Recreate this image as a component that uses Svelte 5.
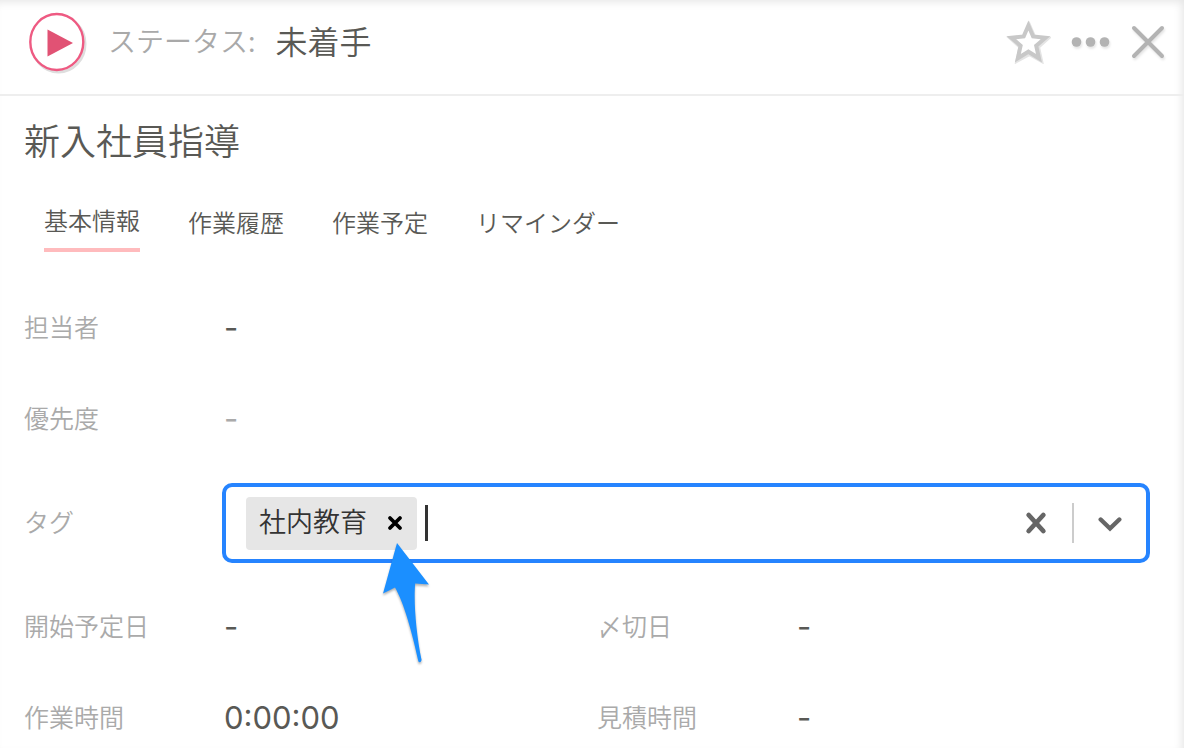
<script>
	let status = "未着手";
	let title = "新入社員指導";
	let activeTab = 0;
	let starred = false;
	let tags = ["社内教育"];
	let tagText = "";

	const tabs = ["基本情報", "作業履歴", "作業予定", "リマインダー"];

	function removeTag(i) {
		tags = tags.filter((t, n) => n !== i);
	}

	function clearTags() {
		tags = [];
		tagText = "";
	}
</script>

<div class="panel">
	<header>
		<button class="play" aria-label="開始">
			<svg width="60" height="62" viewBox="0 0 60 62">
				<ellipse cx="30.5" cy="32" rx="26.5" ry="28" fill="none" stroke="#dedede" stroke-width="3" />
				<ellipse cx="28.8" cy="30" rx="26.5" ry="28" fill="#fff" stroke="#ee5a82" stroke-width="2.4" />
				<path d="M19.5 17.5L45 31L19.5 44.5Z" fill="#e15274" />
			</svg>
		</button>
		<span class="statusLabel">ステータス:</span>
		<span class="status">{status}</span>

		<div class="actions">
			<button aria-label="お気に入り" aria-pressed={starred} on:click={() => (starred = !starred)}>
				<svg width="45" height="44" viewBox="0 0 45 44">
					<path d="M23.5 6L28.5 17.5L41.5 18.5L32 27L35 40.5L23.5 34L11.5 40.5L14.5 27L5 18.5L18.5 17.5Z" fill="none" stroke="#e4e4e4" stroke-width="4" />
					<path
						d="M22.4 5.5L27.1 16.4L39.5 17.7L30.2 25.7L33 38.2L22.4 31.7L11.8 38.2L14.6 25.7L5.3 17.7L17.7 16.4Z"
						fill={starred ? "#c8c8c8" : "#fff"}
						stroke="#c8c8c8"
						stroke-width="4"
					/>
				</svg>
			</button>
			<button aria-label="メニュー">
				<svg class="shadow" width="40" height="12" viewBox="0 0 40 12">
					<circle cx="5.5" cy="6" r="4.8" fill="#b3b3b3" />
					<circle cx="19.5" cy="6" r="4.8" fill="#b3b3b3" />
					<circle cx="33.5" cy="6" r="4.8" fill="#b3b3b3" />
				</svg>
			</button>
			<button aria-label="閉じる">
				<svg class="shadow" width="34" height="34" viewBox="0 0 34 34">
					<path d="M3 3L31 31M31 3L3 31" stroke="#b3b3b3" stroke-width="4" stroke-linecap="round" />
				</svg>
			</button>
		</div>
	</header>

	<h1>{title}</h1>

	<nav>
		{#each tabs as tab, i}
			<button class:active={activeTab === i} on:click={() => (activeTab = i)}>{tab}</button>
		{/each}
	</nav>

	<div class="fields">
		<div class="field wide">
			<span class="label">担当者</span>
			<span class="value">-</span>
		</div>
		<div class="field wide">
			<span class="label">優先度</span>
			<span class="value empty">-</span>
		</div>

		<div class="field wide">
			<label class="label" for="tags">タグ</label>
			<div class="select">
				{#each tags as tag, i}
					<div class="tag">
						<span>{tag}</span>
						<button aria-label="削除" on:click={() => removeTag(i)}>
							<svg width="16" height="16" viewBox="0 0 16 16">
								<path d="M3 3L13 13M13 3L3 13" stroke="#000" stroke-width="3.8" stroke-linecap="round" />
							</svg>
						</button>
						<svg class="arrow" width="54" height="126" viewBox="0 0 54 126">
							<path
								d="M17 2L49 43.5L35.2 42.5C33.5 60 36 92 41.6 119Q40.5 122.5 38.4 120.5C32 91 24 62 15 46.5L3 52.5Z"
								fill="#1b8fff"
							/>
						</svg>
					</div>
				{/each}
				<span class="caret"></span>
				<input id="tags" type="text" autocomplete="off" bind:value={tagText} />
				<button aria-label="クリア" on:click={clearTags}>
					<svg width="24" height="24" viewBox="0 0 24 24">
						<path d="M4.7 4L19.3 20M19.3 4L4.7 20" stroke="#666" stroke-width="4.8" stroke-linecap="round" />
					</svg>
				</button>
				<span class="separator"></span>
				<button aria-label="開く">
					<svg width="24" height="24" viewBox="0 0 24 24">
						<path d="M2.7 8.5L12 17.5L21.3 8.5" fill="none" stroke="#666" stroke-width="4.4" stroke-linecap="round" />
					</svg>
				</button>
			</div>
		</div>

		<div class="field">
			<span class="label">開始予定日</span>
			<span class="value">-</span>
		</div>
		<div class="field">
			<span class="label">〆切日</span>
			<span class="value">-</span>
		</div>
		<div class="field">
			<span class="label">作業時間</span>
			<span class="value">0:00:00</span>
		</div>
		<div class="field">
			<span class="label">見積時間</span>
			<span class="value">-</span>
		</div>
	</div>
</div>

<style>
	:global(body) {
		margin: 0;
		background: #fff;
	}

	.panel {
		min-height: 100vh;
		box-sizing: border-box;
		color: #595955;
		font-family: "Noto Sans CJK JP", sans-serif;
		font-weight: 350;
		box-shadow: inset -4px 4px 8px -2px #e6e6e6;
	}

	button {
		display: flex;
		padding: 0;
		border: 0;
		background: none;
		color: inherit;
		font: inherit;
		cursor: pointer;
	}

	svg {
		display: block;
	}

	header {
		display: flex;
		align-items: center;
		padding: 12px 19px 20px 28px;
		border-bottom: 2px solid #eee;
	}

	.statusLabel {
		margin-left: 20px;
		padding-bottom: 6px;
		color: #a9a9a9;
		font-size: 28px;
		line-height: 40px;
	}

	.status {
		margin-left: 20px;
		padding-bottom: 6px;
		font-size: 32px;
		line-height: 40px;
	}

	.actions {
		display: flex;
		align-items: center;
		gap: 20px;
		margin-left: auto;
		padding-bottom: 2px;
	}

	.shadow {
		filter: drop-shadow(1px 2px 1px #e4e4e4);
	}

	h1 {
		margin: 17px 24px 0;
		font-size: 36px;
		font-weight: 350;
		line-height: 52px;
	}

	nav {
		display: flex;
		align-items: flex-start;
		gap: 48px;
		margin: 37px 44px 0;
	}

	nav button {
		padding: 2px 0 8px;
		font-size: 24px;
		line-height: 36px;
	}

	nav .active {
		padding: 0 0 10px;
		border-bottom: 4px solid #ffbbbd;
	}

	.fields {
		display: grid;
		grid-template-columns: 1fr 1fr;
		row-gap: 37px;
		padding: 49px 14px 0 24px;
	}

	.field {
		display: flex;
		align-items: center;
		min-height: 54px;
	}

	.wide {
		grid-column: span 2;
	}

	.label {
		flex: none;
		width: 198px;
		padding-bottom: 4px;
		color: #aaa;
		font-size: 25px;
		line-height: 40px;
	}

	.value {
		padding-left: 2px;
		font-family: Inter, sans-serif;
		font-size: 31px;
		font-weight: 400;
		line-height: 40px;
	}

	.empty {
		color: #aaa;
	}

	.select {
		display: flex;
		flex: 1;
		align-items: center;
		box-sizing: border-box;
		height: 80px;
		margin-right: 20px;
		padding: 0 24px 0 20px;
		border: 4px solid #2684ff;
		border-radius: 10px;
	}

	.tag {
		position: relative;
		display: flex;
		align-items: center;
		gap: 20px;
		padding: 4px 14px 5px 13px;
		border-radius: 4px;
		background: #e6e6e6;
		color: #333;
		font-size: 27px;
		line-height: 40px;
	}

	.tag span {
		padding-bottom: 4px;
	}

	/* points up at the remove button */
	.arrow {
		position: absolute;
		top: 44px;
		right: -17px;
		filter: drop-shadow(0 2px 1px rgba(0, 0, 0, 0.3));
		pointer-events: none;
	}

	.caret {
		width: 3px;
		height: 36px;
		margin-left: 8px;
		background: #333;
	}

	input {
		flex: 1;
		min-width: 0;
		padding: 0;
		border: 0;
		outline: 0;
		background: none;
		color: #333;
		font: inherit;
		font-size: 27px;
		caret-color: transparent;
	}

	.separator {
		width: 2px;
		height: 40px;
		margin: 0 24px;
		background: #ccc;
	}
</style>
